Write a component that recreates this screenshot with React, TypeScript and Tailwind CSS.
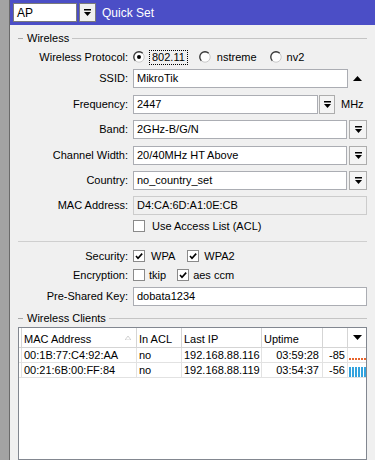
import React from "react";

const DropGlyph = () => (
  <svg width="7" height="7" viewBox="0 0 7 7">
    <rect x="0" y="0" width="7" height="1.5" fill="#000" />
    <path d="M0 3h7L3.5 7z" fill="#000" />
  </svg>
);

const Radio = ({ checked }: { checked?: boolean }) => (
  <svg width="12" height="12" viewBox="0 0 12 12">
    <circle cx="6" cy="6" r="5.2" fill="#fff" stroke="#c8c8c8" strokeWidth="1" />
    <path d="M2.3 9.7 A5.2 5.2 0 0 1 9.7 2.3" stroke="#3a3a3a" fill="none" strokeWidth="1.3" />
    {checked && <circle cx="6" cy="6" r="2" fill="#000" />}
  </svg>
);

const Check = ({ checked }: { checked?: boolean }) => (
  <div className="w-[12px] h-[12px] border border-[#8a8a8a] bg-white flex items-center justify-center shrink-0">
    {checked && (
      <svg width="10" height="10" viewBox="0 0 10 10">
        <path d="M2 5 L4 7.3 L8.2 2.6" stroke="#000" strokeWidth="1.6" fill="none" />
      </svg>
    )}
  </div>
);

const GroupHeader = ({ title, cls }: { title: string; cls: string }) => (
  <div className={"flex items-center h-[14px] " + cls}>
    <div className="w-[5px] h-px bg-[#a9a9a9]" />
    <div className="ml-[4px] leading-none">{title}</div>
    <div className="ml-[3px] flex-1 h-px bg-[#c4c4c4]" />
  </div>
);

const Label = ({ children }: { children: React.ReactNode }) => (
  <div className="w-[110px] text-right shrink-0 leading-none">{children}</div>
);

const Box = ({ text, cls }: { text: string; cls: string }) => (
  <div className={"h-full border border-[#abadb3] flex items-center pl-[3px] leading-none " + cls}>{text}</div>
);

const DropBtn = ({ cls }: { cls: string }) => (
  <div className={"h-full border border-[#adadad] bg-[#f4f4f4] flex items-center justify-center shrink-0 " + cls}>
    <DropGlyph />
  </div>
);

const clients = [
  { mac: "00:1B:77:C4:92:AA", acl: "no", ip: "192.168.88.116", up: "03:59:28", sig: "-85", kind: "orange" },
  { mac: "00:21:6B:00:FF:84", acl: "no", ip: "192.168.88.119", up: "03:54:37", sig: "-56", kind: "blue" },
];

export default function App() {
  return (
    <div className="w-[375px] h-[460px] overflow-hidden flex font-['Liberation_Sans',Arial,sans-serif] text-[11px] text-black">
      <div className="w-[9px] bg-[#a3a3a3] shrink-0" />
      <div className="w-px bg-[#6a6a6a] shrink-0" />
      <div className="flex-1 flex flex-col">
        {/* title bar */}
        <div className="h-[25px] bg-[#4b4ec6] flex items-center pl-[3px] shrink-0">
          <div className="w-[64px] h-[19px] bg-white border border-[#7a7a7a] flex items-center pl-[3px] text-[12px] leading-none">AP</div>
          <div className="ml-[2px] w-[17px] h-[19px] bg-[#f0f0f0] border border-[#7a7a7a] flex items-center justify-center">
            <DropGlyph />
          </div>
          <div className="ml-[6px] text-white text-[12px] leading-none">Quick Set</div>
        </div>

        {/* body */}
        <div className="flex-1 bg-[#f0f0f0] pl-[8px] pr-[8px] flex flex-col">
          <GroupHeader title="Wireless" cls="mt-[6px]" />

          {/* protocol */}
          <div className="flex items-center h-[16px] mt-[4px]">
            <Label>Wireless Protocol:</Label>
            <div className="ml-[5px] flex items-center">
              <Radio checked />
              <div className="ml-[4px] border border-dotted border-black px-[2px] h-[15px] flex items-center leading-none">802.11</div>
              <div className="ml-[11px]"><Radio /></div>
              <div className="ml-[6px] leading-none">nstreme</div>
              <div className="ml-[13px]"><Radio /></div>
              <div className="ml-[5px] leading-none">nv2</div>
            </div>
          </div>

          {/* SSID */}
          <div className="flex items-center h-[19px] mt-[4px]">
            <Label>SSID:</Label>
            <Box text="MikroTik" cls="ml-[5px] flex-1 bg-white" />
            <div className="w-[19px] flex items-center justify-center">
              <svg width="9" height="5" viewBox="0 0 9 5"><path d="M0 5h9L4.5 0z" fill="#000" /></svg>
            </div>
          </div>

          {/* Frequency */}
          <div className="flex items-center h-[19px] mt-[7px]">
            <Label>Frequency:</Label>
            <Box text="2447" cls="ml-[5px] w-[185px] bg-white" />
            <DropBtn cls="ml-[1px] w-[16px]" />
            <div className="ml-[6px] leading-none">MHz</div>
          </div>

          {/* Band */}
          <div className="flex items-center h-[19px] mt-[6px]">
            <Label>Band:</Label>
            <Box text="2GHz-B/G/N" cls="ml-[5px] flex-1 bg-white" />
            <DropBtn cls="ml-[2px] w-[18px]" />
          </div>

          {/* Channel width */}
          <div className="flex items-center h-[19px] mt-[7px]">
            <Label>Channel Width:</Label>
            <Box text="20/40MHz HT Above" cls="ml-[5px] flex-1 bg-white" />
            <DropBtn cls="ml-[2px] w-[18px]" />
          </div>

          {/* Country */}
          <div className="flex items-center h-[19px] mt-[6px]">
            <Label>Country:</Label>
            <Box text="no_country_set" cls="ml-[5px] flex-1 bg-white" />
            <DropBtn cls="ml-[2px] w-[18px]" />
          </div>

          {/* MAC */}
          <div className="flex items-center h-[19px] mt-[6px]">
            <Label>MAC Address:</Label>
            <div className="ml-[5px] flex-1 h-full border border-[#cccccc] bg-[#f0f0f0] flex items-center pl-[3px] leading-none">D4:CA:6D:A1:0E:CB</div>
          </div>

          {/* ACL */}
          <div className="flex items-center h-[14px] mt-[4px] pl-[115px]">
            <Check />
            <div className="ml-[7px] leading-none">Use Access List (ACL)</div>
          </div>

          <div className="mt-[8px] h-px bg-[#cfcfcf]" />

          {/* Security */}
          <div className="flex items-center h-[16px] mt-[6px]">
            <Label>Security:</Label>
            <div className="ml-[5px] flex items-center">
              <Check checked />
              <div className="ml-[6px] leading-none">WPA</div>
              <div className="ml-[12px]"><Check checked /></div>
              <div className="ml-[5px] leading-none">WPA2</div>
            </div>
          </div>

          {/* Encryption */}
          <div className="flex items-center h-[16px] mt-[3px]">
            <Label>Encryption:</Label>
            <div className="ml-[5px] flex items-center">
              <Check />
              <div className="ml-[4px] leading-none">tkip</div>
              <div className="ml-[11px]"><Check checked /></div>
              <div className="ml-[4px] leading-none">aes ccm</div>
            </div>
          </div>

          {/* PSK */}
          <div className="flex items-center h-[19px] mt-[4px]">
            <Label>Pre-Shared Key:</Label>
            <Box text="dobata1234" cls="ml-[5px] flex-1 bg-white" />
          </div>

          <GroupHeader title="Wireless Clients" cls="mt-[5px]" />

          {/* table */}
          <div className="mt-[2px] flex-1 bg-white border border-[#828790] flex flex-col">
            <div className="flex h-[20px] border-b border-[#d5d5d5]">
              <div className="w-[3px] border-r border-[#d5d5d5]" />
              <div className="w-[115px] border-r border-[#d5d5d5] flex items-center pl-[2px] pt-[3px] relative">
                <span className="leading-none">MAC Address</span>
                <svg className="absolute right-[5px] top-[8px]" width="6" height="4" viewBox="0 0 6 4"><path d="M0 4h6L3 0z" fill="none" stroke="#c6c6c6" strokeWidth="0.8" /></svg>
              </div>
              <div className="w-[45px] border-r border-[#d5d5d5] flex items-center pl-[2px] pt-[3px] leading-none">In ACL</div>
              <div className="w-[80px] border-r border-[#d5d5d5] flex items-center pl-[2px] pt-[3px] leading-none">Last IP</div>
              <div className="w-[61px] border-r border-[#d5d5d5] flex items-center pl-[2px] pt-[3px] leading-none">Uptime</div>
              <div className="w-[25px] border-r border-[#d5d5d5]" />
              <div className="flex-1 flex items-center justify-center">
                <svg width="9" height="5" viewBox="0 0 9 5"><path d="M0 0h9L4.5 5z" fill="#000" /></svg>
              </div>
            </div>
            {clients.map((c) => (
              <div key={c.mac} className="flex h-[15px] border-b border-[#e2e2e2]">
                <div className="w-[3px] border-r border-[#e2e2e2]" />
                <div className="w-[115px] border-r border-[#e2e2e2] flex items-center pl-[2px] leading-none">{c.mac}</div>
                <div className="w-[45px] border-r border-[#e2e2e2] flex items-center pl-[2px] leading-none">{c.acl}</div>
                <div className="w-[80px] border-r border-[#e2e2e2] flex items-center pl-[2px] leading-none">{c.ip}</div>
                <div className="w-[61px] border-r border-[#e2e2e2] flex items-center justify-end pr-[3px] leading-none">{c.up}</div>
                <div className="w-[25px] border-r border-[#e2e2e2] flex items-center justify-end pr-[2px] leading-none">{c.sig}</div>
                <div className="flex-1 flex items-end pl-[1px]">
                  {c.kind === "orange" ? (
                    <svg width="17" height="4" viewBox="0 0 17 4" className="mb-[1px]">
                      {[0, 3, 6, 9, 12, 15].map((x) => (
                        <rect key={x} x={x} y="1" width="2" height="2" fill="#e8642c" />
                      ))}
                    </svg>
                  ) : (
                    <svg width="17" height="11" viewBox="0 0 17 11">
                      {[0, 3, 6, 9, 12, 15].map((x) => (
                        <rect key={x} x={x} y="1" width="2" height="10" fill="#33a3de" />
                      ))}
                    </svg>
                  )}
                </div>
              </div>
            ))}
          </div>
        </div>
      </div>
    </div>
  );
}
